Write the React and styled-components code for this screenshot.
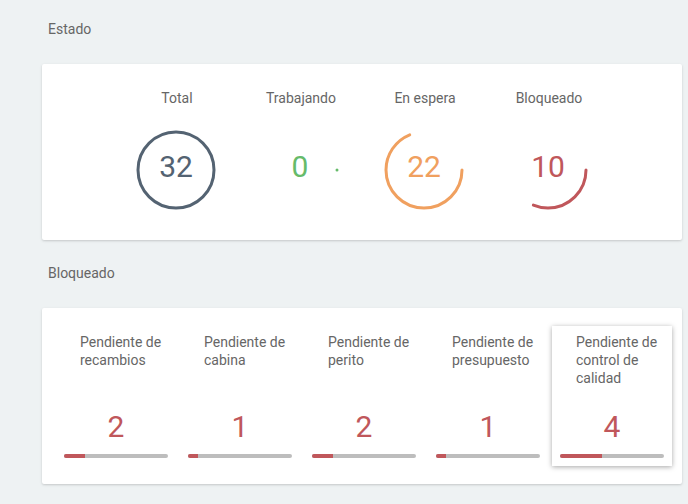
import React from "react";
import styled, { createGlobalStyle } from "styled-components";

const GlobalStyle = createGlobalStyle`
  html, body {
    margin: 0;
    padding: 0;
    background: #eef2f3;
    font-family: Roboto, "Liberation Sans", Arial, sans-serif;
  }
`;

const Page = styled.div`
  padding: 19px 6px 20px 42px;
`;

const SectionTitle = styled.h2`
  margin: 0 0 25px 6px;
  font-size: 14px;
  line-height: 20px;
  font-weight: 400;
  color: #666;
`;

const Card = styled.section`
  background: #fff;
  border-radius: 2px;
  box-shadow: 0 1px 3px rgba(0, 0, 0, 0.12), 0 1px 2px rgba(0, 0, 0, 0.06);
  height: 176px;
  box-sizing: border-box;
`;

const StatusCard = styled(Card)`
  display: flex;
  justify-content: center;
  padding-top: 24px;
  margin-bottom: 23px;
`;

const Column = styled.div`
  width: 124px;
  display: flex;
  flex-direction: column;
  align-items: center;
`;

const ColumnLabel = styled.div`
  font-size: 14px;
  line-height: 20px;
  color: #666;
  margin-bottom: 21px;
  padding-left: 2px;
`;

const Gauge = styled.div`
  position: relative;
  width: 82px;
  height: 82px;
`;

const GaugeValue = styled.span`
  position: absolute;
  inset: 0;
  display: flex;
  align-items: center;
  justify-content: center;
  padding-bottom: 8px;
  box-sizing: border-box;
  font-size: 30px;
  color: ${(p) => p.$color};
`;

const BlockedCard = styled(Card)`
  display: flex;
  gap: 4px;
  padding: 18px 10px 18px 14px;
`;

const Tile = styled.div`
  width: 120px;
  height: 140px;
  box-sizing: border-box;
  padding: 7px 8px 8px;
  display: flex;
  flex-direction: column;
  background: #fff;
  box-shadow: ${(p) =>
    p.$raised ? "0 1px 5px rgba(0, 0, 0, 0.35)" : "none"};
`;

const TileLabel = styled.div`
  padding-left: 16px;
  font-size: 14px;
  line-height: 18px;
  color: #666;
`;

const TileValue = styled.div`
  margin-top: auto;
  text-align: center;
  font-size: 30px;
  line-height: 36px;
  color: #c0575b;
`;

const Bar = styled.div`
  margin-top: 9px;
  height: 4px;
  border-radius: 2px;
  background: #bdbdbd;
  overflow: hidden;
`;

const BarFill = styled.div`
  height: 100%;
  background: #c0575b;
`;

const R = 38;
const C = 2 * Math.PI * R;

function Ring({ fraction, color }) {
  return (
    <svg width="82" height="82" viewBox="0 0 82 82">
      {fraction > 0 ? (
        <circle
          cx="41"
          cy="41"
          r={R}
          fill="none"
          stroke={color}
          strokeWidth="3"
          strokeLinecap={fraction >= 1 ? "butt" : "round"}
          strokeDasharray={`${fraction * C} ${C}`}
        />
      ) : (
        <circle cx={41 + R - 1} cy="41" r="1.5" fill={color} />
      )}
    </svg>
  );
}

const status = [
  { label: "Total", value: 32, color: "#546372" },
  { label: "Trabajando", value: 0, color: "#66bb6a" },
  { label: "En espera", value: 22, color: "#f0a05f" },
  { label: "Bloqueado", value: 10, color: "#c0575b" },
];

const blocked = [
  { label: "Pendiente de recambios", value: 2 },
  { label: "Pendiente de cabina", value: 1 },
  { label: "Pendiente de perito", value: 2 },
  { label: "Pendiente de presupuesto", value: 1 },
  { label: "Pendiente de control de calidad", value: 4, raised: true },
];

export default function App() {
  const total = 32;
  const blockedTotal = 10;
  return (
    <>
      <GlobalStyle />
      <Page>
        <SectionTitle>Estado</SectionTitle>
        <StatusCard>
          {status.map((s) => (
            <Column key={s.label}>
              <ColumnLabel>{s.label}</ColumnLabel>
              <Gauge>
                <Ring fraction={s.value / total} color={s.color} />
                <GaugeValue $color={s.color}>{s.value}</GaugeValue>
              </Gauge>
            </Column>
          ))}
        </StatusCard>
        <SectionTitle>Bloqueado</SectionTitle>
        <BlockedCard>
          {blocked.map((b) => (
            <Tile key={b.label} $raised={b.raised}>
              <TileLabel>{b.label}</TileLabel>
              <TileValue>{b.value}</TileValue>
              <Bar>
                <BarFill style={{ width: `${(b.value / blockedTotal) * 100}%` }} />
              </Bar>
            </Tile>
          ))}
        </BlockedCard>
      </Page>
    </>
  );
}
